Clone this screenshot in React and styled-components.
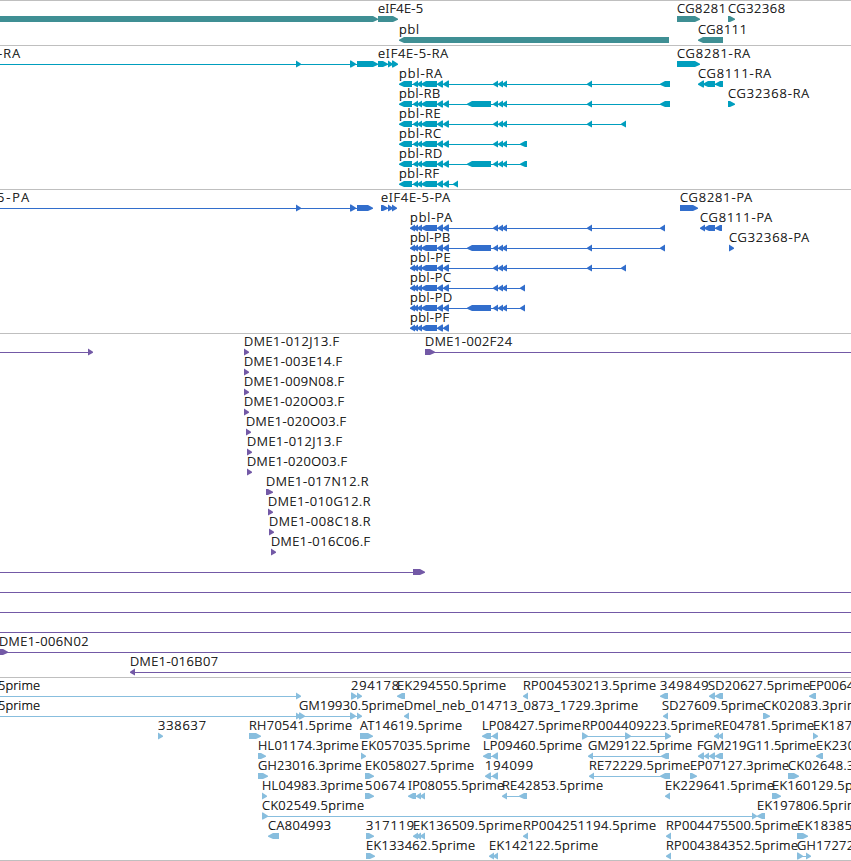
import React from "react";
import styled, { createGlobalStyle } from "styled-components";

const GlobalStyle = createGlobalStyle`
  body {
    margin: 0;
    background: #fff;
  }
`;

const Browser = styled.main`
  display: flex;
  flex-direction: column;
  width: 851px;
  height: 861px;
  box-sizing: border-box;
  overflow: hidden;
  border-bottom: 1px solid #bfbfbf;
`;

const TrackWrapper = styled.section`
  display: flex;
  flex-direction: column;
  flex: none;
  border-top: 1px solid #bfbfbf;
  padding-bottom: ${(props) => props.$gap}px;
  color: ${(props) => props.$color};
`;

const LaneSvg = styled.svg`
  display: block;
  flex: none;
  width: 851px;
  height: ${(props) => props.$height}px;
  overflow: visible;
  fill: currentColor;
`;

const Label = styled.text`
  font-family: "Noto Sans", "Open Sans", sans-serif;
  font-size: 12.8px;
  font-weight: 300;
  fill: #000;
  stroke: #000;
  stroke-width: 0.22px;
  white-space: pre;
`;

// Feature: { label: [text, start, end], line: [start, end], fwd: [[start, end]], rev: [[start, end]] }
const feature = (label, fwd, rev, line) => ({ label, fwd: fwd || [], rev: rev || [], line });

const tail = [[421, 437], [437, 443], [443, 449]];
const middle = [[493, 498], [498, 503], [502, 507]];
const rnaStart = [[399, 412], [413, 418], [417, 422], ...tail];
const proteinStart = [[410, 415], [413, 418], [417, 422], ...tail];
const longExon = [467, 491];

const genes = [
  [
    feature(null, [[-10, 378]]),
    feature(["eIF4E-5", 378, 423], [[378, 398]]),
    feature(["CG8281", 677, 726], [[677, 700]]),
    feature(["CG32368", 728, 785], [[728, 735]]),
  ],
  [
    feature(["pbl", 399, 419], null, [[399, 669]]),
    feature(["CG8111", 698, 747], null, [[698, 723]]),
  ],
];

const transcripts = [
  [
    feature(["-RA", -2, 20], [[296, 301], [350, 356], [357, 378]], null, [0, 376]),
    feature(["eIF4E-5-RA", 378, 448], [[378, 388], [388, 393], [392, 398]], null, [378, 396]),
    feature(["CG8281-RA", 677, 750], [[677, 700]]),
  ],
  [
    feature(["pbl-RA", 399, 442], null, [...rnaStart, ...middle, [587, 592], [660, 670]], [402, 670]),
    feature(["CG8111-RA", 698, 771], null, [[698, 704], [703, 715], [715, 723]], [701, 722]),
  ],
  [
    feature(["pbl-RB", 399, 440], null, [...rnaStart, longExon, ...middle, [587, 592], [660, 670]], [402, 670]),
    feature(["CG32368-RA", 728, 809], [[728, 735]]),
  ],
  [feature(["pbl-RE", 399, 440.5], null, [...rnaStart, ...middle, [587, 592], [621, 626]], [402, 626])],
  [feature(["pbl-RC", 399, 441], null, [...rnaStart, ...middle, [520, 527]], [402, 527])],
  [feature(["pbl-RD", 399, 442], null, [...rnaStart, longExon, ...middle, [520, 527]], [402, 527])],
  [feature(["pbl-RF", 399, 439], null, [...rnaStart, [453, 458]], [402, 458])],
];

const proteins = [
  [
    feature(["5-PA", -3, 29], [[296, 301], [350, 356], [357, 373]], null, [0, 371]),
    feature(["eIF4E-5-PA", 381, 450], [[381, 388], [388, 393], [392, 397]], null, [381, 396]),
    feature(["CG8281-PA", 680, 752], [[680, 698]]),
  ],
  [
    feature(["pbl-PA", 410, 452], null, [...proteinStart, ...middle, [587, 592], [660, 665]], [413, 665]),
    feature(["CG8111-PA", 700, 772], null, [[700, 705], [704, 715], [715, 722]], [703, 721]),
  ],
  [
    feature(["pbl-PB", 410, 450], null, [...proteinStart, longExon, ...middle, [587, 592], [660, 665]], [413, 665]),
    feature(["CG32368-PA", 729, 809], [[729, 734]]),
  ],
  [feature(["pbl-PE", 410, 450.5], null, [...proteinStart, ...middle, [587, 592], [621, 626]], [413, 626])],
  [feature(["pbl-PC", 410, 451], null, [...proteinStart, ...middle, [520, 525]], [413, 525])],
  [feature(["pbl-PD", 410, 452], null, [...proteinStart, longExon, ...middle, [520, 525]], [413, 525])],
  [feature(["pbl-PF", 410, 449], null, proteinStart, [413, 449])],
];

const bacs = [
  [
    feature(null, [[88, 93]], null, [0, 91]),
    feature(["DME1-012J13.F", 244, 339], [[244, 249]]),
    feature(["DME1-002F24", 425, 512], [[425, 435]], null, [425, 851]),
  ],
  [feature(["DME1-003E14.F", 244, 342], [[244, 249]])],
  [feature(["DME1-009N08.F", 244, 344], [[244, 249]])],
  [feature(["DME1-020O03.F", 244, 344], [[244, 249]])],
  [feature(["DME1-020O03.F", 246, 346], [[246, 251]])],
  [feature(["DME1-012J13.F", 247, 342], [[247, 252]])],
  [feature(["DME1-020O03.F", 247, 347], [[247, 252]])],
  [feature(["DME1-017N12.R", 266, 368.5], [[266, 273]])],
  [feature(["DME1-010G12.R", 268, 370.5], [[268, 273]])],
  [feature(["DME1-008C18.R", 269, 370.5], [[269, 274]])],
  [feature(["DME1-016C06.F", 271, 370], [[271, 276]])],
  [feature(null, [[413, 425]], null, [0, 423])],
  [feature(null, null, null, [0, 851])],
  [feature(null, null, null, [0, 851])],
  [feature(null, null, null, [0, 851])],
  [feature(["DME1-006N02", -1, 88.5], [[-3, 8]], null, [0, 851])],
  [feature(["DME1-016B07", 130, 218], null, [[130, 135]], [132, 851])],
];

const ests = [
  [
    feature(["5prime", -2, 40], [[296, 301]], null, [0, 299]),
    feature(["294178", 351, 399], [[351, 357], [357, 362]], null, [351, 360]),
    feature(["EK294550.5prime", 397, 506], null, [[397, 405]]),
    feature(["RP004530213.5prime", 523, 656], null, [[523, 528]]),
    feature(["349849", 660, 708.5], null, [[660, 668]]),
    feature(["SD20627.5prime", 708, 810], null, [[709, 715], [715, 723]], [712, 722]),
    feature(["EP0064", 809, 854], null, [[809, 816]]),
  ],
  [
    feature(["5prime", -2, 40], [[296, 301], [299, 305], [350, 356], [357, 362]], null, [0, 360]),
    feature(["GM19930.5prime", 299, 404]),
    feature(["Dmel_neb_014713_0873_1729.3prime", 404, 638], null, [[404, 409]]),
    feature(["SD27609.5prime", 662, 764], null, [[663, 668]]),
    feature(["CK02083.3prime", 763, 866], [[763, 770]]),
  ],
  [
    feature(["338637", 158, 206], [[158, 163]]),
    feature(["RH70541.5prime", 249, 352], [[249, 261]]),
    feature(["AT14619.5prime", 360, 462], [[360, 373]]),
    feature(["LP08427.5prime", 482, 581], null, [[482, 491], [492, 498]], [485, 497]),
    feature(["RP004409223.5prime", 582, 714], [[582, 588], [625, 631], [665, 671]], null, [582, 669]),
    feature(["RE04781.5prime", 714, 814], null, [[714, 719], [718, 723]]),
    feature(["EK187", 813, 852], [[813, 818]]),
  ],
  [
    feature(["HL01174.3prime", 258, 358.5], [[258, 266]]),
    feature(["EK057035.5prime", 361, 470], [[361, 366]]),
    feature(["LP09460.5prime", 483, 582], null, [[483, 491], [492, 498]], [486, 497]),
    feature(["GM29122.5prime", 588, 692], null, [[588, 593], [661, 669]], [590, 669]),
    feature(["F", 697, 703], null, [[698, 704], [704, 709]], [701, 722]),
    feature(["GM219G11.5prime", 703.5, 816], null, [[709, 715], [715, 723]]),
    feature(["EK230", 816, 855], null, [[816, 823]]),
  ],
  [
    feature(["GH23016.3prime", 258, 361.5], [[258, 268]]),
    feature(["EK058027.5prime", 365, 474], [[365, 374]]),
    feature(["194099", 485, 533], null, [[485, 491], [492, 498]], [488, 497]),
    feature(["RE72229.5prime", 589, 690], null, [[589, 594], [660, 670]], [591, 670]),
    feature(["EP07127.3prime", 690, 789], [[690, 697]]),
    feature(["CK02648.3prime", 788, 891], [[788, 799]]),
  ],
  [
    feature(["HL04983.3prime", 262, 363], [[262, 267]]),
    feature(["50674", 365, 405], [[365, 374]]),
    feature(["IP08055.5prime", 408, 504], null, [[408, 416], [416, 421], [420, 425]], [411, 424]),
    feature(["RE42853.5prime", 502, 603], null, [[502, 507], [519, 527]], [504, 527]),
    feature(["EK229641.5prime", 665, 774], null, [[665, 670]]),
    feature(["EK160129.5prime", 772, 881], [[772, 781]]),
  ],
  [
    feature(["CK02549.5prime", 262, 364], [[262, 268], [752, 757]], null, [262, 755]),
    feature(["EK197806.5prime", 757, 866], null, [[757, 765]]),
  ],
  [
    feature(["CA804993", 268, 331], null, [[268, 279]]),
    feature(["317119", 366, 414], [[366, 374]]),
    feature(["EK136509.5prime", 413, 522], null, [[413, 418], [416, 421], [420, 425]], [415, 424]),
    feature(["RP004251194.5prime", 523, 656], null, [[523, 528]]),
    feature(["RP004475500.5prime", 666, 798], null, [[666, 671]]),
    feature(["EK18385", 797, 852], [[797, 808]]),
  ],
  [
    feature(["EK133462.5prime", 366, 475], [[366, 375]]),
    feature(["EK142122.5prime", 489, 598], null, [[489, 494], [493, 498]]),
    feature(["RP004384352.5prime", 666, 798], null, [[666, 671]]),
    feature(["GH17272", 797, 854], [[797, 803], [806, 811]], null, [797, 809]),
  ],
];

const tracks = [
  { id: "genes", color: "#3f8f94", lanes: genes, laneHeight: 21, gap: 2 },
  { id: "transcripts", color: "#009ebe", lanes: transcripts, laneHeight: 20, gap: 3 },
  { id: "proteins", color: "#326ecc", lanes: proteins, laneHeight: 20, gap: 3 },
  { id: "bacs", color: "#7359a6", lanes: bacs, laneHeight: 20, gap: 3 },
  { id: "ests", color: "#88bede", lanes: ests, laneHeight: 20, gap: 2 },
];

// A block with its head pointing along the strand
const Exon = ({ start, end, reverse }) => {
  const size = end - start;
  const head = Math.min(5, size);
  const tip = reverse ? start : end;
  const back = reverse ? end : start;
  const neck = reverse ? start + head : end - head;
  // short exons are all head, drawn slightly taller to stay visible
  const top = size <= 6 ? 14.5 : 15;
  const bottom = size <= 6 ? 21.5 : 21;
  return <polygon points={`${back},${top} ${neck},${top} ${tip},17.7 ${tip},18.7 ${neck},${bottom} ${back},${bottom}`} />;
};

const Feature = ({ item }) => (
  <g>
    {item.line && <rect x={item.line[0]} y={18} width={item.line[1] - item.line[0]} height={1} />}
    {item.fwd.map(([start, end]) => (
      <Exon key={start} start={start} end={end} />
    ))}
    {item.rev.map(([start, end]) => (
      <Exon key={start} start={start} end={end} reverse />
    ))}
    {item.label && (
      <Label x={item.label[1]} y={12} textLength={item.label[2] - item.label[1]}>
        {item.label[0]}
      </Label>
    )}
  </g>
);

const Track = ({ track }) => (
  <TrackWrapper $color={track.color} $gap={track.gap}>
    {track.lanes.map((lane, i) => (
      <LaneSvg key={i} $height={track.laneHeight}>
        {lane.map((item, j) => (
          <Feature key={j} item={item} />
        ))}
      </LaneSvg>
    ))}
  </TrackWrapper>
);

const App = () => (
  <>
    <GlobalStyle />
    <Browser>
      {tracks.map((track) => (
        <Track key={track.id} track={track} />
      ))}
    </Browser>
  </>
);

export default App;
